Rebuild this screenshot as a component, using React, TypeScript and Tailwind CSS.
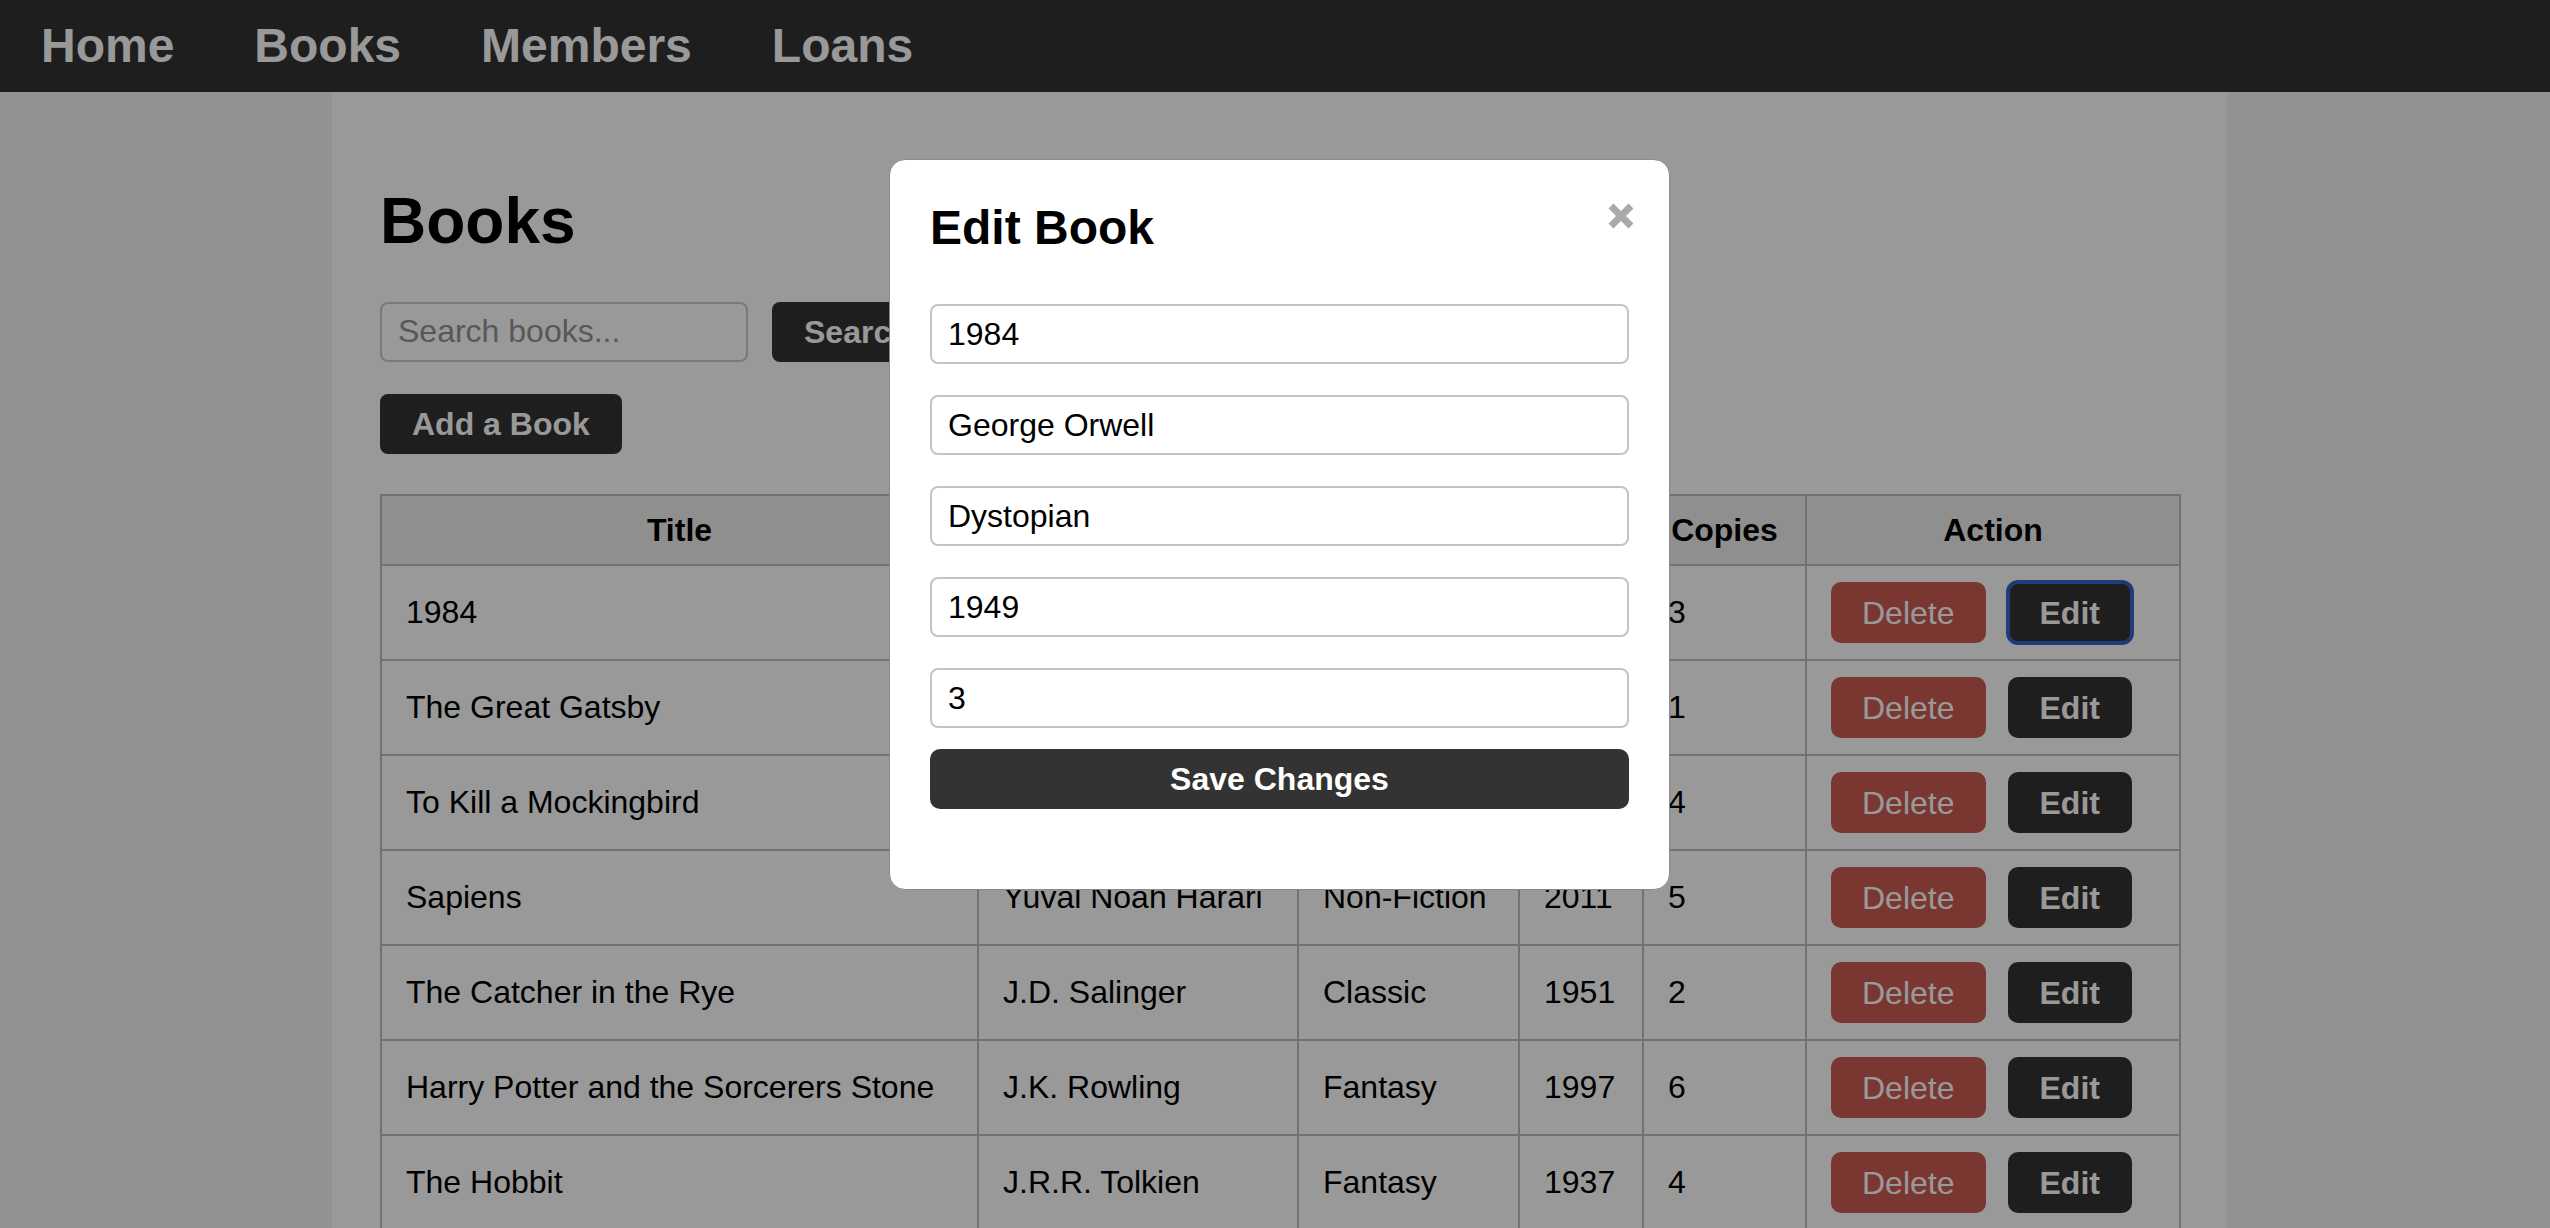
import React from "react";

const books = [
  ["1984", "George Orwell", "Dystopian", "1949", "3"],
  ["The Great Gatsby", "F. Scott Fitzgerald", "Classic", "1925", "1"],
  ["To Kill a Mockingbird", "Harper Lee", "Classic", "1960", "4"],
  ["Sapiens", "Yuval Noah Harari", "Non-Fiction", "2011", "5"],
  ["The Catcher in the Rye", "J.D. Salinger", "Classic", "1951", "2"],
  ["Harry Potter and the Sorcerers Stone", "J.K. Rowling", "Fantasy", "1997", "6"],
  ["The Hobbit", "J.R.R. Tolkien", "Fantasy", "1937", "4"],
];

const headers = ["Title", "Author", "Genre", "Year", "Copies", "Action"];

export default function App() {
  return (
    <div className="min-h-screen bg-[#f3f3f3] font-['Liberation_Sans',Arial,sans-serif] text-black text-[32px]">
      <nav className="h-[92px] bg-[#333333] flex items-center pl-[41px] gap-[80px]">
        {["Home", "Books", "Members", "Loans"].map((n) => (
          <a key={n} className="text-white font-bold text-[48px] leading-[1.149]">
            {n}
          </a>
        ))}
      </nav>

      <div className="ml-[332px] w-[1895px] bg-white min-h-[1136px] px-[48px] pt-[48px] pb-[48px]">
        <h1 className="mt-[45px] mb-[43px] text-[64px] font-bold leading-[1.149]">Books</h1>

        <div className="flex items-center gap-[24px]">
          <input
            className="w-[368px] h-[60px] border-2 border-[#cccccc] rounded-[8px] px-[16px] text-[32px] placeholder:text-[#939393] outline-none"
            placeholder="Search books..."
          />
          <button className="h-[60px] px-[32px] rounded-[8px] bg-[#333333] text-white font-bold text-[32px]">
            Search
          </button>
        </div>

        <button className="mt-[32px] h-[60px] px-[32px] rounded-[8px] bg-[#333333] text-white font-bold text-[32px]">
          Add a Book
        </button>

        <table className="mt-[40px] w-full table-fixed border-collapse border-2 border-[#bcbcbc]">
          <colgroup>
            <col className="w-[597px]" />
            <col className="w-[320px]" />
            <col className="w-[221px]" />
            <col className="w-[124px]" />
            <col className="w-[163px]" />
            <col className="w-[374px]" />
          </colgroup>
          <thead>
            <tr className="bg-[#eeeeee]">
              {headers.map((h) => (
                <th key={h} className="border-2 border-[#bcbcbc] px-[24px] py-[16px] font-bold text-center leading-[1.149] whitespace-nowrap">
                  {h}
                </th>
              ))}
            </tr>
          </thead>
          <tbody>
            {books.map((b, i) => (
              <tr key={b[0]}>
                {b.map((c, j) => (
                  <td key={j} className="border-2 border-[#bcbcbc] px-[24px] py-[16px] leading-[1.149] whitespace-nowrap">
                    {c}
                  </td>
                ))}
                <td className="border-2 border-[#bcbcbc] px-[24px] py-[16px]">
                  <div className="flex items-center gap-[22px]">
                    <button className="h-[61px] px-[31px] rounded-[10px] bg-[#cb5c53] text-white text-[32px] leading-none">
                      Delete
                    </button>
                    <button
                      className={
                        i === 0
                          ? "h-[61px] px-[32px] rounded-[10px] bg-[#333333] text-white font-bold text-[32px] leading-none shadow-[0_0_0_2px_#3366cc,inset_0_0_0_2px_#3366cc]"
                          : "h-[61px] px-[32px] rounded-[10px] bg-[#333333] text-white font-bold text-[32px] leading-none"
                      }
                    >
                      Edit
                    </button>
                  </div>
                </td>
              </tr>
            ))}
          </tbody>
        </table>
      </div>

      <div className="fixed inset-0 bg-black/40">
        <div className="absolute left-[889px] top-[159px] w-[781px] h-[731px] bg-white rounded-[16px] border border-[#8a8a8a] px-[40px] pt-[40px]">
          <svg
            className="absolute right-[34px] top-[42px]"
            width="28"
            height="28"
            viewBox="0 0 28 28"
          >
            <path d="M4 4 L24 24 M24 4 L4 24" stroke="#aaaaaa" strokeWidth="7" strokeLinecap="butt" />
          </svg>
          <h2 className="text-[48px] font-bold leading-[1.149] mb-[49px]">Edit Book</h2>
          {["1984", "George Orwell", "Dystopian", "1949", "3"].map((v, i) => (
            <input
              key={i}
              readOnly
              value={v}
              className={
                i === 4
                  ? "block w-full h-[60px] mb-[21px] border-2 border-[#c4c4c4] rounded-[8px] px-[16px] text-[32px] text-black outline-none"
                  : "block w-full h-[60px] mb-[31px] border-2 border-[#c4c4c4] rounded-[8px] px-[16px] text-[32px] text-black outline-none"
              }
            />
          ))}
          <button className="w-full h-[60px] rounded-[10px] bg-[#333333] text-white font-bold text-[32px]">
            Save Changes
          </button>
        </div>
      </div>
    </div>
  );
}
